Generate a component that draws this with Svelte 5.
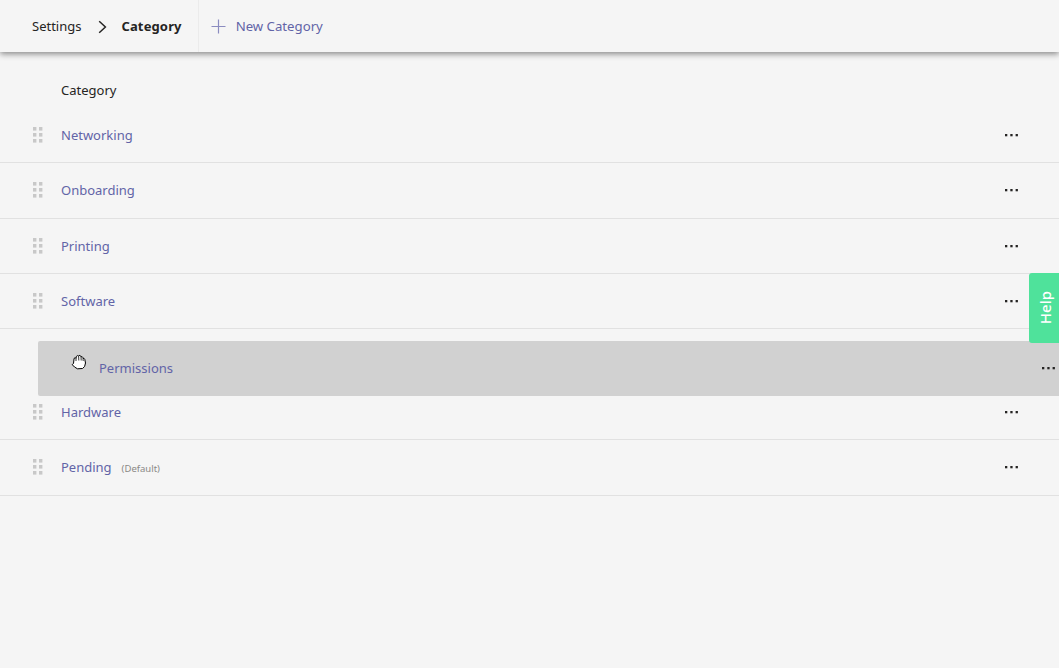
<script>
	const rows = [
		{ name: 'Networking' },
		{ name: 'Onboarding' },
		{ name: 'Printing' },
		{ name: 'Software' },
		{ name: '', placeholder: true },
		{ name: 'Hardware' },
		{ name: 'Pending', note: '(Default)' }
	];
	const grip = [
		[0, 0],
		[6, 0],
		[0, 6],
		[6, 6],
		[0, 12],
		[6, 12]
	];
</script>

{#snippet dots()}
	<svg class="more" width="13" height="4" viewBox="0 0 13 4" aria-hidden="true">
		<rect x="0" y="1" width="2.3" height="2.3" fill="#252423" />
		<rect x="5.3" y="1" width="2.3" height="2.3" fill="#252423" />
		<rect x="10.6" y="1" width="2.3" height="2.3" fill="#252423" />
	</svg>
{/snippet}

<div class="page">
	<header class="topbar">
		<nav class="crumbs">
			<span>Settings</span>
			<svg class="chevron" width="10" height="14" viewBox="0 0 10 14" aria-hidden="true">
				<path d="M1.2 1.2 L7.4 7 L1.2 12.8" fill="none" stroke="#252423" stroke-width="1.5" />
			</svg>
			<strong>Category</strong>
		</nav>
		<button class="new">
			<svg width="15" height="15" viewBox="0 0 15 15" aria-hidden="true">
				<path d="M7.5 0.5 V14.5 M0.5 7.5 H14.5" stroke="#8b8cc0" stroke-width="1.2" fill="none" />
			</svg>
			<span>New Category</span>
		</button>
	</header>

	<main class="list">
		<div class="heading">Category</div>
		{#each rows as row}
			{#if row.placeholder}
				<div class="row blank"></div>
			{:else}
				<div class="row">
					<svg class="grip" width="10" height="16" viewBox="0 0 10 16" aria-hidden="true">
						{#each grip as [x, y]}
							<rect {x} {y} width="3.4" height="3.6" fill="#c8c8c8" />
						{/each}
					</svg>
					<span class="name">{row.name}</span>
					{#if row.note}<span class="note">{row.note}</span>{/if}
					{@render dots()}
				</div>
			{/if}
		{/each}
	</main>

	<div class="dragged">
		<svg class="hand" width="16" height="17" viewBox="0 0 16 17" aria-hidden="true">
			<path
				d="M2.5 9.5 L3 5 Q3.2 3.4 4.6 3.8 L5 4.4 L5.4 2.4 Q6.2 1 7.4 2 L7.8 1.6 Q9 1 9.8 2.2 L10 2.8 Q11.4 2.2 11.9 3.6 L12 4.4 Q13.4 4 13.8 5.4 L14.5 9 L13.6 12.5 L11.5 14.5 L6.5 14.8 L3.5 13 L1.2 10.6 Z"
				fill="#fff"
				stroke="#000"
				stroke-width="1"
				stroke-linejoin="round"
			/>
			<path d="M5 4.4 L5 7 M7.6 2 L7.8 6.5 M10 2.8 L10.2 6.5 M12 4.4 L12.2 7" stroke="#000" stroke-width="0.8" fill="none" />
		</svg>
		<span class="name">Permissions</span>
		{@render dots()}
	</div>

	<button class="help"><span>Help</span></button>
</div>

<style>
	:global(body) {
		background: #f5f5f5;
	}

	.page {
		position: relative;
		height: 668px;
		overflow: hidden;
		background: #f5f5f5;
		font-family: 'Noto Sans', 'Open Sans', sans-serif;
		font-size: 13px;
		color: #252423;
	}

	.topbar {
		display: flex;
		align-items: stretch;
		height: 52px;
		padding-left: 32px;
		box-sizing: border-box;
		background: #f5f5f5;
		box-shadow: 0 2px 6px rgba(0, 0, 0, 0.45);
	}

	.crumbs {
		display: flex;
		align-items: center;
		padding-right: 16px;
		border-right: 1px solid #ebebeb;
	}

	.chevron {
		margin: 2px 13px 0 17px;
	}

	.crumbs strong {
		font-weight: 700;
		letter-spacing: 0.01em;
	}

	.new {
		display: flex;
		align-items: center;
		gap: 10px;
		padding: 0 0 0 12px;
		border: 0;
		background: none;
		font: inherit;
		font-size: 13.2px;
		color: #6264a7;
	}

	.list {
		padding-top: 25px;
	}

	.heading {
		height: 30.9px;
		padding-left: 61px;
		line-height: 26px;
	}

	.row {
		display: flex;
		align-items: center;
		height: 55.4px;
		box-sizing: border-box;
		padding: 0 41px 0 33px;
		border-bottom: 1px solid #e1e1e1;
	}

	.row.blank {
		border-bottom: 0;
	}

	.grip {
		margin-right: 18px;
	}

	.name {
		color: #6264a7;
	}

	.note {
		margin-left: 10px;
		font-size: 9.5px;
		color: #8a8886;
		padding-top: 3px;
	}

	.more {
		margin-left: auto;
	}

	.dragged {
		position: absolute;
		top: 341px;
		left: 38px;
		right: 0;
		display: flex;
		align-items: center;
		height: 54.5px;
		padding: 0 4px 0 61px;
		box-sizing: border-box;
		background: #d1d1d1;
		border-radius: 2px 0 0 2px;
	}

	.hand {
		position: absolute;
		left: 33px;
		top: 13px;
	}

	.help {
		position: absolute;
		top: 273px;
		right: 0;
		display: flex;
		align-items: center;
		justify-content: center;
		width: 30px;
		height: 70px;
		padding: 0 0 0 1px;
		border: 0;
		border-radius: 3px 0 0 3px;
		background: #4fe29b;
		color: #fff;
		font: 500 15px 'Noto Sans', sans-serif;
	}

	.help span {
		writing-mode: vertical-rl;
		transform: rotate(180deg);
	}
</style>
